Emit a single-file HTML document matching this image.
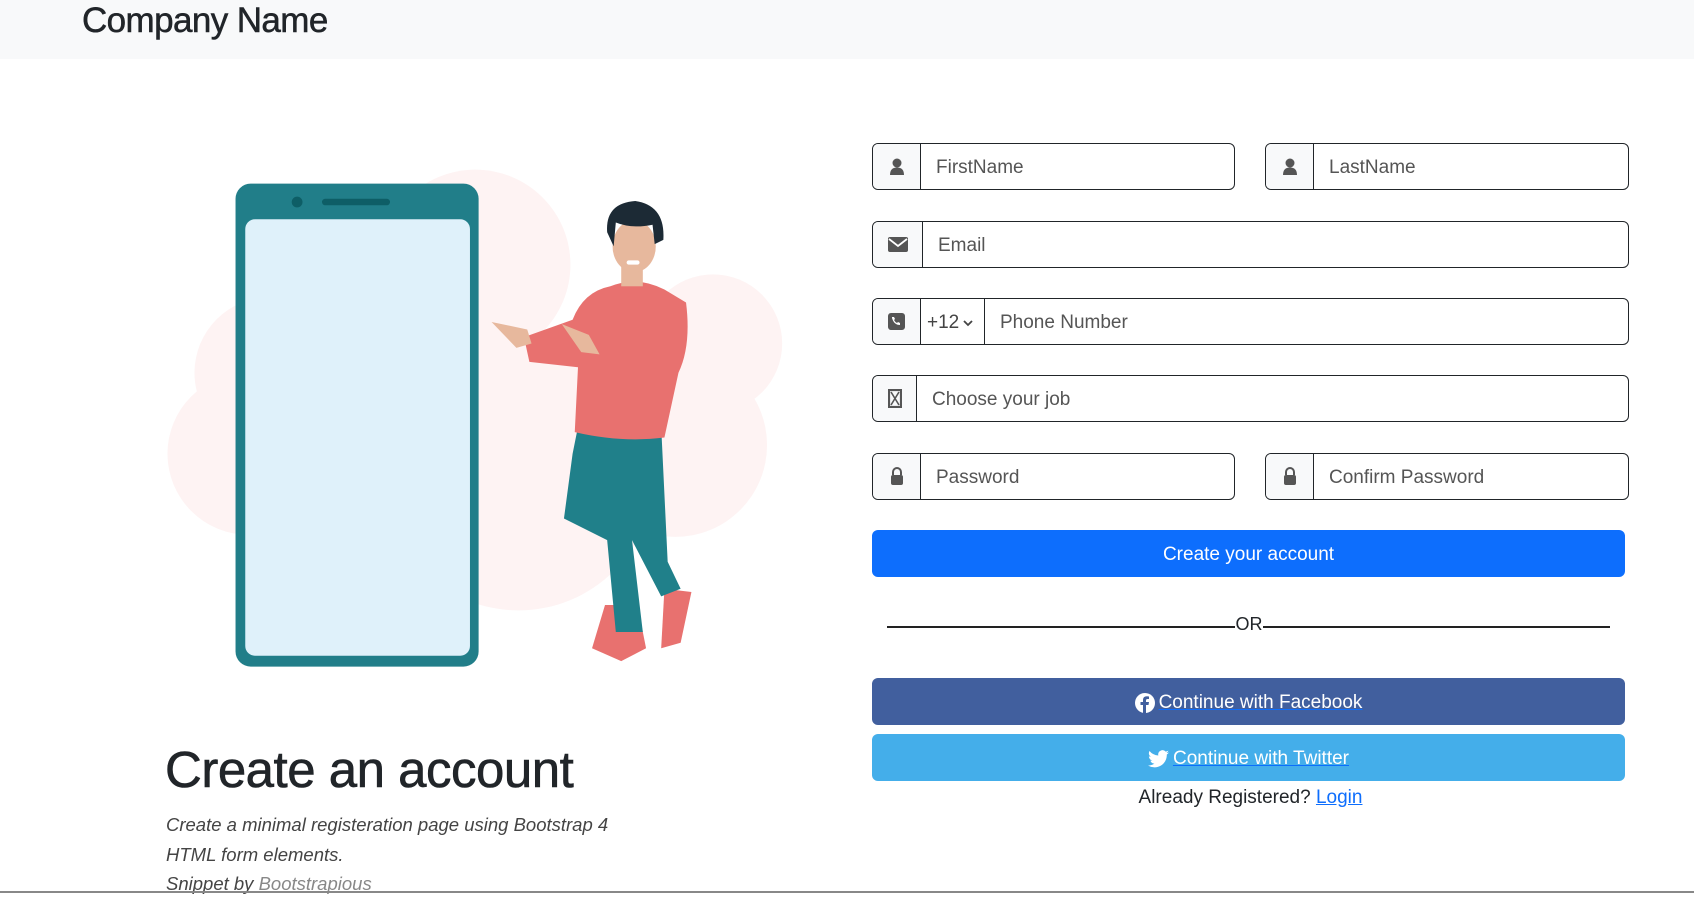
<!DOCTYPE html>
<html><head><meta charset="utf-8"><style>
*{box-sizing:border-box;margin:0;padding:0}
body{width:1694px;height:893px;overflow:hidden;background:#fff;font-family:"Liberation Sans",sans-serif;color:#212529;position:relative}
.hdr{position:absolute;left:0;top:0;width:1694px;height:59px;background:#f8f9fa}
.brand{position:absolute;left:82px;top:0px;font-size:35px;line-height:42px;letter-spacing:-0.6px;-webkit-text-stroke:0.5px #212529}
.ig{position:absolute;height:47px;border:1.5px solid #212529;border-radius:6px;overflow:hidden;display:flex;background:#fff}
.ig .ic{width:48px;background:#f8f9fa;border-right:1.5px solid #212529;display:flex;align-items:center;justify-content:center;flex:none}
.ig .tx{padding-left:15px;padding-top:3px;display:flex;align-items:center;font-size:19px;color:#555}
.btn{position:absolute;left:872px;width:753px;height:47px;border-radius:6px;color:#fff;font-size:19px;display:flex;align-items:center;justify-content:center;padding-top:2px}
.u{text-decoration:underline;text-decoration-color:#0d6efd}
.bottom{position:absolute;left:0;top:891px;width:1694px;height:2px;background:#888}
</style></head><body>
<div class="hdr"><div class="brand">Company Name</div></div>

<svg style="position:absolute;left:0;top:0" width="1694" height="893" viewBox="0 0 1568 826.6">
<g fill="#fef3f3">
<circle cx="440" cy="245" r="88"/><circle cx="250" cy="345" r="70"/><circle cx="230" cy="420" r="75"/>
<circle cx="660" cy="318" r="64"/><circle cx="625" cy="412" r="85"/><circle cx="480" cy="440" r="125"/>
</g>
<rect x="218" y="170" width="225" height="447" rx="14" fill="#217e89"/>
<rect x="227" y="203" width="208" height="404" rx="9" fill="#dff1fa"/>
<circle cx="275" cy="187" r="5" fill="#0e5e66"/>
<rect x="298" y="184" width="63" height="6" rx="3" fill="#0e5e66"/>
<path d="M560 560 L548 600 L575 612 L598 600 L590 560Z" fill="#e8716f"/>
<path d="M615 545 L640 548 L630 595 L612 600Z" fill="#e8716f"/>
<path d="M535 395 L612 395 L618 520 L630 545 L612 552 L585 500 L595 585 L570 585 L562 500 L522 480 L530 420Z" fill="#20808a"/>
<path d="M565 265 Q590 255 615 268 L635 280 Q640 320 628 345 L615 405 Q575 410 532 400 L535 340 L490 335 L485 312 L530 296 Q540 270 565 265Z" fill="#e8716f"/>
<path d="M455 298 L488 305 L492 318 L478 322Z" fill="#e7b89d"/>
<path d="M520 300 L545 310 L555 328 L538 326Z" fill="#e7b89d"/>
<rect x="575" y="240" width="20" height="25" fill="#e7b89d"/>
<ellipse cx="587" cy="228" rx="20" ry="24" fill="#e7b89d"/>
<path d="M562 215 Q560 188 588 186 Q616 190 614 222 L606 226 L604 208 Q585 212 570 206 L568 228Z" fill="#1c2a35"/>
<rect x="580" y="241" width="12" height="4" rx="2" fill="#fff"/>
</svg>

<div style="position:absolute;left:165px;top:739px;font-size:51px;line-height:62px;letter-spacing:-0.5px;-webkit-text-stroke:0.6px #212529">Create an account</div>
<div style="position:absolute;left:166px;top:810px;font-size:18.5px;line-height:29.5px;font-style:italic;color:#444;width:470px">Create a minimal registeration page using Bootstrap 4<br>HTML form elements.<br>Snippet by <span style="color:#888">Bootstrapious</span></div>

<svg width="0" height="0" style="position:absolute"><defs>
<g id="user"><circle cx="8" cy="5" r="4.5" fill="#555"/><path d="M1 17 Q1 9.5 8 9.5 Q15 9.5 15 17Z" fill="#555"/></g>
<g id="lock"><path d="M4 8 V5 a4 4 0 0 1 8 0 V8" stroke="#555" stroke-width="2" fill="none"/><rect x="2" y="8" width="12" height="10" rx="2" fill="#555"/></g>
</defs></svg>

<div class="ig" style="left:872px;top:143px;width:363px"><div class="ic"><svg width="16" height="17"><use href="#user"/></svg></div><div class="tx">FirstName</div></div>
<div class="ig" style="left:1265px;top:143px;width:364px"><div class="ic"><svg width="16" height="17"><use href="#user"/></svg></div><div class="tx">LastName</div></div>
<div class="ig" style="left:872px;top:221px;width:757px"><div class="ic" style="width:50px"><svg width="20" height="15"><rect width="20" height="15" rx="2" fill="#555"/><path d="M1 2 L10 9 L19 2" stroke="#fff" stroke-width="1.8" fill="none"/></svg></div><div class="tx">Email</div></div>
<div class="ig" style="left:872px;top:298px;width:757px"><div class="ic"><svg width="17" height="17"><rect width="17" height="17" rx="3" fill="#555"/><path d="M4 4 L6 4 L7 6 L6 7 Q7 9 9 10 L10 9 L12 10 L12 12 Q6 12 4 5Z" fill="#fff"/></svg></div><div style="width:64px;border-right:1.5px solid #212529;display:flex;align-items:center;padding-left:6px;padding-top:3px;font-size:19px;color:#444">+12<svg width="10" height="8" style="margin-left:4px"><path d="M1 2 L5 6 L9 2" stroke="#444" stroke-width="1.8" fill="none"/></svg></div><div class="tx">Phone Number</div></div>
<div class="ig" style="left:872px;top:375px;width:757px"><div class="ic" style="width:44px"><svg width="14" height="19"><rect x="1" y="1" width="12" height="17" fill="none" stroke="#555" stroke-width="2.2"/><path d="M3 3 L11 16 M11 3 L3 16" stroke="#555" stroke-width="1.6"/></svg></div><div class="tx">Choose your job</div></div>
<div class="ig" style="left:872px;top:453px;width:363px"><div class="ic"><svg width="16" height="19"><use href="#lock"/></svg></div><div class="tx">Password</div></div>
<div class="ig" style="left:1265px;top:453px;width:364px"><div class="ic"><svg width="16" height="19"><use href="#lock"/></svg></div><div class="tx">Confirm Password</div></div>

<div class="btn" style="top:530px;background:#0d6efd">Create your account</div>
<div style="position:absolute;left:887px;top:626px;width:723px;height:1.5px;background:#222"></div>
<div style="position:absolute;left:1235px;top:613px;width:28px;background:#fff;text-align:center;font-size:18px;line-height:22px">OR</div>
<div class="btn" style="top:678px;background:#415f9e"><svg width="20" height="20" viewBox="0 0 20 20" style="margin-right:4px"><circle cx="10" cy="10" r="10" fill="#fff"/><path d="M11 20 V12 H13.5 L14 9 H11 V7.5 Q11 6 12.5 6 H14 V3.5 Q13 3.3 12 3.3 Q8 3.3 8 7 V9 H5.5 V12 H8 V20Z" fill="#415f9e"/></svg><span class="u">Continue with Facebook</span></div>
<div class="btn" style="top:734px;background:#44aeea"><svg width="21" height="18" viewBox="0 0 24 20" style="margin-right:4px"><path d="M24 2.4a10 10 0 0 1-2.8.8A5 5 0 0 0 23.3.4a10 10 0 0 1-3.1 1.2A4.9 4.9 0 0 0 11.8 6 14 14 0 0 1 1.7.9a4.9 4.9 0 0 0 1.5 6.6A4.9 4.9 0 0 1 1 6.9a4.9 4.9 0 0 0 3.9 4.8 4.9 4.9 0 0 1-2.2.1 4.9 4.9 0 0 0 4.6 3.4A9.9 9.9 0 0 1 0 17.3 14 14 0 0 0 7.5 19.5c9 0 14-7.5 14-14v-.6A10 10 0 0 0 24 2.4z" fill="#fff"/></svg><span class="u">Continue with Twitter</span></div>
<div style="position:absolute;left:872px;width:757px;top:785px;text-align:center;font-size:19px;line-height:26px">Already Registered? <span style="color:#0d6efd;text-decoration:underline">Login</span></div>
<div class="bottom"></div>
</body></html>
